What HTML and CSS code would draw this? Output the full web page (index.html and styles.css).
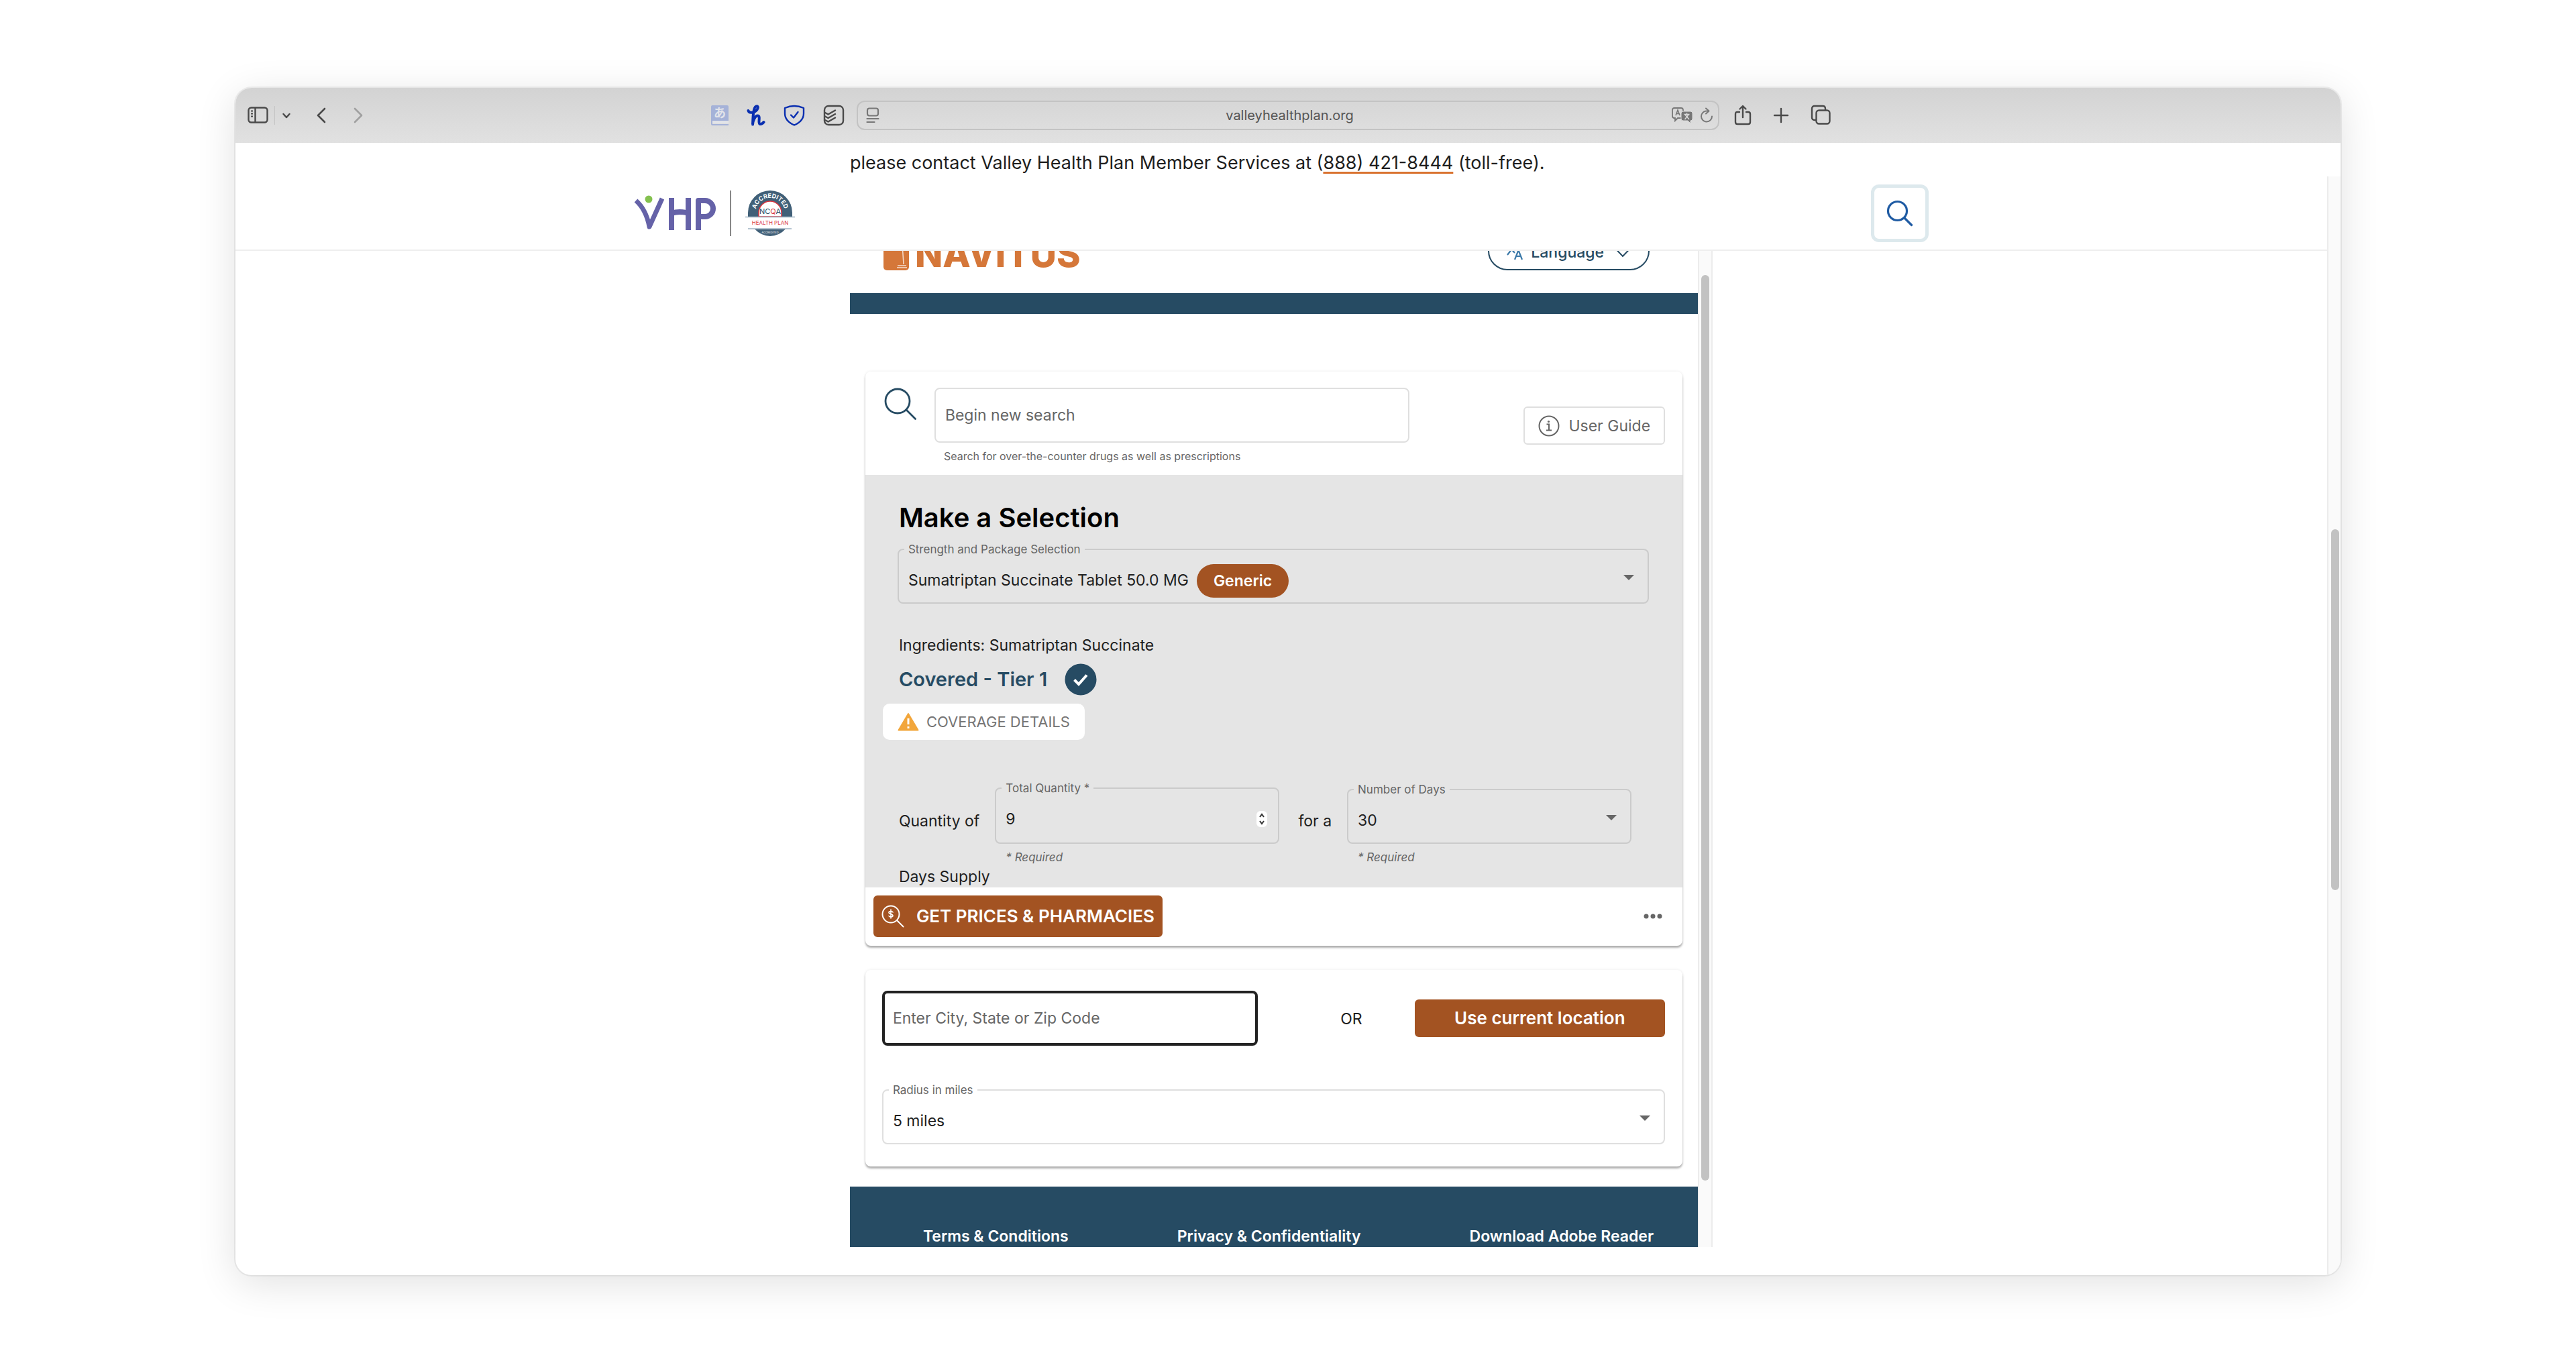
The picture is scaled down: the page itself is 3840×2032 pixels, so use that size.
FILE: index.html
```html
<!DOCTYPE html>
<html lang="en">
<head>
  <meta charset="UTF-8" />
  <meta name="viewport" content="width=device-width, initial-scale=1.0">
  <title>Valley Health Plan – Drug Search</title>
  <link rel="stylesheet" href="styles.css">
</head>
<body>

<div class="browser">

  <!-- Browser toolbar -->
  <div class="toolbar">
    <div class="tools tools-left">
      <button class="tool" aria-label="Sidebar">
        <svg width="32" height="26" viewBox="0 0 32 26" fill="none" stroke="#4a4a4a" stroke-width="2.4"><rect x="1.5" y="1.5" width="28" height="22" rx="4"/><path d="M11.500 2v21"/><path d="M5 6.500h3M5 10.500h3M5 14.500h3" stroke-width="1.800"/></svg>
      </button>
      <span class="divider"></span>
      <button class="tool" aria-label="Tab groups">
        <svg width="14" height="26" viewBox="0 0 14 26" fill="none" stroke="#4a4a4a" stroke-width="2.500" stroke-linecap="round" stroke-linejoin="round"><path d="M2.500 11l4.500 5 4.500-5"/></svg>
      </button>
      <button class="tool back" aria-label="Back">
        <svg width="14" height="26" viewBox="0 0 14 26" fill="none" stroke="#4a4a4a" stroke-width="2.600" stroke-linecap="round" stroke-linejoin="round"><path d="M12 3L2 13l10 10"/></svg>
      </button>
      <button class="tool forward" aria-label="Forward">
        <svg width="14" height="26" viewBox="0 0 14 26" fill="none" stroke="#a0a0a0" stroke-width="2.600" stroke-linecap="round" stroke-linejoin="round"><path d="M2 3l10 10L2 23"/></svg>
      </button>
    </div>

    <div class="tools tools-ext">
      <button class="tool" aria-label="Dictionary">
        <svg class="dictionary" width="26" height="30" viewBox="0 0 26 30"><path d="M2 0h22q2 0 2 2v21H0V2q0-2 2-2zM0 23h2v5h24v2H2q-2 0-2-2z" fill="#a5b2d8"/><path d="M2 23.500h24v3.500H2z" fill="#e2e4ea"/><text x="13" y="18" text-anchor="middle" class="kana">あ</text></svg>
      </button>
      <button class="tool" aria-label="Honey">
        <svg width="28" height="32" viewBox="0 0 28 32" fill="none" stroke="#0a2fb0" stroke-width="4" stroke-linecap="round" stroke-linejoin="round"><path d="M2.500 9c1 4 9 3.500 13-1.500 2.500-3.500 1-6-1.500-5C9.500 4.500 9.500 20 9 29.500c.5-6 3.500-13 7.500-13 5 0-.5 12 3.500 12.500 2 .2 4-1 5.500-3"/></svg>
      </button>
      <button class="tool" aria-label="Ad blocker">
        <svg width="32" height="32" viewBox="0 0 32 32" fill="none" stroke="#0a2fb0" stroke-width="2.400" stroke-linecap="round" stroke-linejoin="round"><path d="M16 2c5 0 9.500 1 14 3v8c0 9-7 14.500-14 17.500C9 27.500 2 22 2 13V5c4.500-2 9-3 14-3z"/><path d="M11 15.500l4 4 6.500-8.500"/></svg>
      </button>
      <button class="tool" aria-label="Todoist">
        <svg width="32" height="32" viewBox="0 0 32 32" fill="none" stroke="#4a4a4a" stroke-width="2.400" stroke-linecap="round" stroke-linejoin="round"><rect x="2" y="2" width="28" height="28" rx="6"/><path d="M3 12l4.500 2.500L18 8.500M3 17.500L7.500 20 18 14M3 23l4.500 2.500L18 19.500"/></svg>
      </button>
    </div>

    <div class="address">
      <svg width="20" height="24" viewBox="0 0 20 24" fill="none" stroke="#777" stroke-width="2.200" stroke-linecap="round"><rect x="2" y="1.500" width="16" height="11" rx="3"/><path d="M1.500 17h17M1.500 22h11"/></svg>
      <input class="address-input" type="text" aria-label="Address" value="valleyhealthplan.org">
      <svg width="32" height="26" viewBox="0 0 32 26"><path d="M4 2h10q3 0 3 3v9q0 3-3 3H9l-4 4v-4H4q-3 0-3-3V5q0-3 3-3z" fill="none" stroke="#777" stroke-width="1.800"/><path d="M6 13l3-8 3 8M7 10.500h4" fill="none" stroke="#777" stroke-width="1.600"/><path d="M17 7h11q3 0 3 3v8q0 3-3 3v4l-4-4h-7q-3 0-3-3v-8q0-3 3-3z" fill="#777" stroke="#dadada"/><path d="M18.500 11.500h8M22.500 9.500v2M19.500 19l5.500-7M26 19l-6-7" stroke="#dadada" stroke-width="1.500" fill="none"/></svg>
      <svg width="20" height="24" viewBox="0 0 20 24" fill="none" stroke="#777" stroke-width="2" stroke-linecap="round" stroke-linejoin="round"><path d="M12 5.500h-2a8 8 0 1 0 8 8"/><path d="M9 1.500l4.500 4L9 9.500"/></svg>
    </div>

    <div class="tools tools-right">
      <button class="tool" aria-label="Share">
        <svg width="26" height="32" viewBox="0 0 26 32" fill="none" stroke="#4a4a4a" stroke-width="2.400" stroke-linecap="round" stroke-linejoin="round"><path d="M8 11H5q-3 0-3 3v12q0 3 3 3h16q3 0 3-3V14q0-3-3-3h-3M13 19V2.500M8.500 6.500L13 2l4.500 4.500"/></svg>
      </button>
      <button class="tool" aria-label="New tab">
        <svg width="24" height="32" viewBox="0 0 24 32" fill="none" stroke="#4a4a4a" stroke-width="2.400" stroke-linecap="round"><path d="M12 6v20M2 16h20"/></svg>
      </button>
      <button class="tool" aria-label="Show all tabs">
        <svg width="30" height="32" viewBox="0 0 30 32" fill="none" stroke="#4a4a4a" stroke-width="2.400" stroke-linejoin="round"><rect x="8.500" y="8.500" width="20" height="20" rx="4"/><path d="M8.500 23H6q-4 0-4-4V6q0-4 4-4h12q4 0 4 4v2.500"/></svg>
      </button>
    </div>
  </div>

  <div class="page">
    <div class="page-main">
      <p class="contact">please contact Valley Health Plan Member Services at (<a href="tel:8884218444">888) 421-8444</a> (toll-free).</p>

      <!-- Site header -->
      <header class="site-header">
        <div class="site-header-inner">
          <a class="brand" href="#" aria-label="Valley Health Plan">
            <svg width="122" height="54" viewBox="0 0 122 54" fill="none" stroke="#6562a8" stroke-width="8" stroke-linejoin="round">
              <path d="M3 8C13 17 20 31 23 47L42 5" stroke-width="7"/>
              <path d="M56 4v48M81 4v48M56 27q12-4 25 0"/>
              <path d="M96 52V8h10a11 11 0 0 1 0 24H96"/>
              <circle cx="22" cy="6" r="5.500" fill="#84c14f" stroke="none"/>
            </svg>
            <span class="brand-divider"></span>
            <svg width="74" height="70" viewBox="0 0 74 70">
              <path d="M4 40V34a33 33 0 0 1 66 0v6z" fill="#416078"/>
              <path d="M20 40V34a17 17 0 0 1 34 0v6z" fill="#fff" stroke="#d8343f" stroke-width="1.500"/>
              <path d="M14 58.500h46Q50 69 37 69T14 58.500z" fill="#416078"/>
              <path d="M0 40.500h74M4 58h65" stroke="#9fb3c2" stroke-width="1.500"/>
              <path id="arc" d="M15 34a22 22 0 0 1 44 0" fill="none"/>
              <text class="badge-arc"><textPath href="#arc" startOffset="50%">ACCREDITED</textPath></text>
              <text class="badge-name" x="37" y="36">NC<tspan fill="#d8343f">Q</tspan>A</text>
              <text class="badge-plan" x="37" y="52">HEALTH PLAN</text>
              <text class="badge-foot" x="37" y="65">ACCREDITED</text>
            </svg>
          </a>
          <button class="site-search" aria-label="Search">
            <svg width="40" height="40" viewBox="0 0 40 40" fill="none" stroke="#1f5ba3" stroke-width="3.200" stroke-linecap="round"><circle cx="16.500" cy="16.500" r="14"/><path d="M27 27l10.500 10.500"/></svg>
          </button>
        </div>
      </header>

      <!-- Embedded drug search -->
      <div class="frame">
        <main class="frame-main">
          <div class="nav-head">
            <a class="navitus" href="#">
              <svg width="38" height="44" viewBox="0 0 38 44"><rect width="38" height="44" rx="5" fill="#d57739"/><path d="M28 5l2 30M21 37h13M20 40h15" stroke="#f6ddcd" stroke-width="1.500" fill="none"/></svg>
              NAVITUS
            </a>
            <button class="language">
              <svg width="26" height="26" viewBox="0 0 26 26" fill="none" stroke="#3a78a8" stroke-width="2.200"><path d="M1 3h13M7.500 0v3M1 17L12 3M3 4l9 10M12 24l5.500-14L23 24M14 19h7"/></svg>
              Language
              <svg class="caret" width="24" height="16" viewBox="0 0 24 16" fill="none" stroke="#264b63" stroke-width="2"><path d="M1.500 3L12 14 22.500 3"/></svg>
            </button>
          </div>
          <div class="nav-bar"></div>

          <section class="card drug-card">
            <div class="search-row">
              <svg width="48" height="48" viewBox="0 0 48 48" fill="none" stroke="#264b63" stroke-width="2.800" stroke-linecap="round"><circle cx="20" cy="20" r="18"/><path d="M33 33l13.500 13.500"/></svg>
              <div class="search-field">
                <input class="text-input" type="text" placeholder="Begin new search" aria-label="Begin new search">
                <p class="hint">Search for over-the-counter drugs as well as prescriptions</p>
              </div>
              <button class="guide">
                <svg width="32" height="32" viewBox="0 0 32 32" fill="none" stroke="#666" stroke-width="2"><circle cx="16" cy="16" r="14.500"/><path d="M12.500 13.500H16V22M12 22.500h8"/><circle cx="15.500" cy="9.500" r="1.600" fill="#666" stroke="none"/></svg>
                User Guide
              </button>
            </div>

            <div class="selection">
              <h1>Make a Selection</h1>
              <fieldset class="field strength">
                <legend><label for="strength">Strength and Package Selection</label></legend>
                <select id="strength"><option>Sumatriptan Succinate Tablet 50.0 MG</option></select>
                <span class="generic">Generic</span>
              </fieldset>

              <p class="ingredients">Ingredients: Sumatriptan Succinate</p>
              <p class="covered">Covered - Tier 1
                <svg width="48" height="48" viewBox="0 0 48 48"><circle cx="24" cy="24" r="23.500" fill="#264b63"/><path d="M14.500 24.500l6.500 6.500 12-13.500" fill="none" stroke="#fff" stroke-width="4"/></svg>
              </p>
              <button class="coverage">
                <svg width="32" height="28" viewBox="0 0 32 28"><path d="M16 2L30.500 26.500h-29z" fill="#f2a63b" stroke="#f2a63b" stroke-width="2" stroke-linejoin="round"/><path d="M16 9v9M16 21v3" stroke="#fff" stroke-width="3"/></svg>
                COVERAGE DETAILS
              </button>

              <div class="quantity">
                <span class="qty-text">Quantity of</span>
                <div class="qty-field">
                  <fieldset class="field">
                    <legend><label for="qty">Total Quantity *</label></legend>
                    <input id="qty" type="number" value="9">
                  </fieldset>
                  <p class="required">* Required</p>
                </div>
                <span class="qty-text">for a</span>
                <div class="qty-field">
                  <fieldset class="field">
                    <legend><label for="days">Number of Days</label></legend>
                    <select id="days"><option>30</option></select>
                  </fieldset>
                  <p class="required">* Required</p>
                </div>
              </div>
              <p class="supply">Days Supply</p>
            </div>

            <div class="actions">
              <button class="prices">
                <svg width="34" height="34" viewBox="0 0 34 34" fill="none" stroke="#fff" stroke-width="2" stroke-linecap="round"><circle cx="14" cy="14" r="12.500"/><path d="M23 23l9.500 9.500"/><path d="M17 11c-1-2-6-2-6 .5s6 2 6 4.500-5 2.500-6 .5M14 7v13" stroke-width="1.600"/></svg>
                GET PRICES &amp; PHARMACIES
              </button>
              <button class="more" aria-label="More options">
                <svg width="28" height="8" viewBox="0 0 28 8" fill="#666"><circle cx="4" cy="4" r="3.500"/><circle cx="14" cy="4" r="3.500"/><circle cx="24" cy="4" r="3.500"/></svg>
              </button>
            </div>
          </section>

          <section class="card location-card">
            <div class="location-row">
              <input class="text-input city" type="text" placeholder="Enter City, State or Zip Code" aria-label="Enter City, State or Zip Code">
              <span class="or">OR</span>
              <button class="locate">Use current location</button>
            </div>
            <fieldset class="field light">
              <legend><label for="radius">Radius in miles</label></legend>
              <select id="radius"><option>5 miles</option></select>
            </fieldset>
          </section>

          <footer class="nav-foot">
            <a href="#">Terms &amp; Conditions</a>
            <a href="#">Privacy &amp; Confidentiality</a>
            <a href="#">Download Adobe Reader</a>
          </footer>
        </main>
        <div class="frame-scroll"><div class="thumb"></div></div>
      </div>
    </div>
    <div class="page-scroll"><div class="thumb"></div></div>
  </div>
</div>

</body>
</html>
```
FILE: styles.css
```css
:root {
  --navy:   #264b63;
  --rust:   #a35322;
  --orange: #d57739;
  --panel:  #e5e5e5;
  --ink:    #1e1e1e;
  --muted:  #666;
  --line:   #dfdfdf;
}

*{box-sizing:border-box}

body{
  margin:0;
  padding:131px 0;
  background:#fff;
  color:var(--ink);
  font-family:Inter,"Noto Sans",sans-serif;
  font-size:23px;
  line-height:28px;
}
p,h1,fieldset{margin:0}
button,input,select{font:inherit;color:inherit}
button{border:none;background:none;padding:0;cursor:pointer}
svg{display:block;flex:none}

/* ----------  BROWSER WINDOW  ---------- */
.browser{
  width:81.72%;
  margin:0 auto;
  border-radius:24px;
  overflow:hidden;
  background:#fff;
  box-shadow:0 0 0 2px rgba(0,0,0,.06), 0 12px 60px rgba(0,0,0,.12);
}
.toolbar{
  display:grid;
  grid-template-columns:1fr 41% 1fr;
  align-items:center;
  height:82px;
  background:linear-gradient(#d3d3d3,#e1e1e1);
}
.tools{display:flex; align-items:center}
.tools-left{grid-column:1; grid-row:1; padding-left:18px}
.divider{width:1px; height:28px; margin:0 10px 0 8px; background:#c4c4c4}
.back{margin-left:38px}
.forward{margin-left:41px}
.tools-ext{grid-column:1; grid-row:1; justify-self:end; gap:27px; padding-right:18px}
.tools-right{padding-left:22px; gap:32px}
.dictionary{overflow:visible}
.kana{font-family:"Noto Sans CJK JP",sans-serif; font-size:18px; font-weight:700; fill:#e2e4ea}

.address{
  display:flex; align-items:center; gap:10px;
  height:44px;
  padding:0 7px 0 12px;
  border:2px solid #c3c3c3;
  border-radius:12px;
}
.address-input{
  flex:1; min-width:0;
  padding:0 0 0 42px;
  border:none; outline:none;
  background:none;
  color:#555;
  font-size:20px;
  text-align:center;
}

/* ----------  PAGE  ---------- */
.page{display:flex}
.page-main{flex:1; min-width:0; padding-bottom:42px}
.page-scroll{
  width:20px;
  margin-top:50px;
  padding:526px 2px 0 4px;
  background:#fafafa;
  border-left:2px solid #ececec;
}
.thumb{background:#c2c2c2; border-radius:8px}
.page-scroll .thumb{height:538px}

.contact{
  width:41.25%;
  margin:0 auto;
  padding-top:12px;
  height:50px;
  font-size:27px;
  line-height:36px;
  white-space:nowrap;
}
.contact a{
  color:inherit;
  text-decoration:underline 3px #d9722f;
  text-underline-offset:4px;
}

/* ----------  SITE HEADER  ---------- */
.site-header{
  height:111px;
  border-bottom:2px solid #eee;
}
.site-header-inner{
  display:flex; justify-content:space-between; align-items:center;
  width:61.9%;
  height:100%;
  margin:0 auto;
}
.brand{display:flex; align-items:center; gap:21px}
.brand-divider{width:2px; height:68px; background:#888}
.badge-arc{font-size:9px; font-weight:700; fill:#fff; text-anchor:middle}
.badge-name{font-size:11px; fill:#264b63; text-anchor:middle}
.badge-plan{font-size:8px; fill:#d8343f; text-anchor:middle}
.badge-foot{font-size:4px; fill:#fff; text-anchor:middle}
.site-search{
  display:flex; align-items:center; justify-content:center;
  width:86px; height:86px;
  border:5px solid #dde9ed;
  border-radius:12px;
}

/* ----------  FRAME  ---------- */
.frame{
  display:flex;
  width:41.25%;
  margin:0 auto;
}
.frame-main{flex:1; min-width:0}
.frame-scroll{
  width:22px;
  padding:36px 3px 0;
  background:#fafafa;
  border:solid #ececec;
  border-width:0 2px;
}
.frame-scroll .thumb{height:1350px}

.nav-head{
  display:flex; justify-content:space-between; align-items:flex-end;
  height:63px;
  padding:0 72px 34px 50px;
  overflow:hidden;
}
.navitus{
  display:flex; align-items:flex-end; gap:9px;
  color:var(--orange);
  font-size:54px; font-weight:800; line-height:48px;
  text-decoration:none;
}
.language{
  display:flex; align-items:center; gap:10px;
  height:58px;
  padding:3px 26px 0;
  border:2px solid var(--navy);
  border-radius:29px;
  color:var(--navy);
  font-weight:500;
}
.caret{margin-left:6px}
.nav-bar{height:31px; background:var(--navy)}

/* ----------  CARDS  ---------- */
.card{
  margin:0 23px;
  border-radius:8px;
  background:#fff;
  box-shadow:0 3px 3px rgba(0,0,0,.3), 0 0 4px rgba(0,0,0,.08);
}
.drug-card{margin-top:86px}
.search-row{
  display:flex; align-items:flex-start;
  height:154px;
  padding:24px 26px 0 28px;
}
.search-field{flex:none; width:60.8%; margin-left:27px}
.text-input{
  display:block;
  width:100%; height:82px;
  padding:0 14px;
  border:2px solid var(--line);
  border-radius:8px;
  background:#fff;
  outline:none;
}
.text-input::placeholder{color:var(--muted); opacity:1}
.hint{
  padding:10px 14px 0;
  color:var(--muted);
  font-size:16px; line-height:20px;
}
.guide{
  display:flex; align-items:center; gap:13px;
  height:57px;
  margin:28px 0 0 auto;
  padding:0 20px;
  border:2px solid var(--line);
  border-radius:6px;
  color:var(--muted);
}

.selection{
  padding:44px 50px 0 48px;
  background:var(--panel);
}
h1{
  padding-left:2px;
  color:#000;
  font-size:40px; font-weight:600; line-height:40px;
}

/* outlined field, the legend sits in the top border */
.field{
  position:relative;
  min-width:0;
  padding:0;
  border:2px solid #cbcbcb;
  border-radius:8px;
}
.field.light{border-color:var(--line)}
.field legend{
  margin-left:8px;
  padding:0 6px;
  color:var(--muted);
  font-size:17px; line-height:20px;
}
.field legend label{display:block}
.field select,
.field input{
  display:block;
  width:100%; height:69px;
  padding:2px 14px 0;
  border:none; outline:none;
  background:none;
  appearance:none;
}
.field select{
  background:url("data:image/svg+xml,%3Csvg xmlns='http://www.w3.org/2000/svg' width='16' height='8'%3E%3Cpath d='M0 0h16L8 8z' fill='%23666'/%3E%3C/svg%3E") no-repeat right 20px top 28px;
}
.field input[type=number]{
  height:71px;
  padding-top:0;
  appearance:textfield;
  background:url("data:image/svg+xml,%3Csvg xmlns='http://www.w3.org/2000/svg' width='16' height='24'%3E%3Crect width='16' height='24' rx='6' fill='%23fff'/%3E%3Cpath d='M5 9l3-4 3 4M5 15l3 4 3-4' fill='none' stroke='%23333' stroke-width='2'/%3E%3C/svg%3E") no-repeat right 16px top 24px;
}
.field input::-webkit-inner-spin-button{appearance:none}
.strength{margin-top:17px}
.generic{
  position:absolute;
  top:12px; left:444px;
  padding:0 25px;
  border-radius:25px;
  background:var(--rust);
  color:#fff;
  font-weight:600; line-height:50px;
}

.ingredients{margin-top:48px; padding-left:2px}
.covered{
  display:flex; align-items:center; gap:26px;
  margin-top:13px;
  padding-left:2px;
  color:var(--navy);
  font-size:29px; font-weight:600;
}
.coverage{
  display:flex; align-items:center; gap:11px;
  height:54px;
  margin:12px 0 0 -22px;
  padding:0 22px;
  border-radius:10px;
  background:#fff;
  color:#757575;
  font-size:22px;
}

.quantity{
  display:flex; align-items:flex-end;
  padding:62px 26px 0 2px;
}
.qty-text{
  align-self:flex-start;
  padding-top:45px;
  white-space:nowrap;
}
.qty-field{flex:1; margin-left:23px}
.qty-field + .qty-text{margin-left:28px}
.required{
  padding:10px 16px 0;
  color:var(--muted);
  font-size:17px; font-style:italic; line-height:20px;
}
.supply{padding:5px 2px 2px}

.actions{
  display:flex; justify-content:space-between; align-items:center;
  height:87px;
  padding:0 30px 2px 12px;
}
.prices{
  display:flex; align-items:center; gap:18px;
  height:62px;
  padding:0 12px;
  border-radius:6px;
  background:var(--rust);
  color:#fff;
  font-size:26px; font-weight:600;
}

/* ----------  LOCATION  ---------- */
.location-card{
  margin-top:36px;
  padding:31px 26px 33px 25px;
}
.location-row{
  display:flex; align-items:center;
  margin-bottom:56px;
}
.text-input.city{
  width:48%;
  border:4px solid #222;
  padding:0 12px;
}
.or{margin:0 78px 0 auto; padding-top:2px}
.locate{
  width:32%; height:56px;
  border-radius:6px;
  background:var(--rust);
  color:#fff;
  font-size:26px; font-weight:600;
}

.nav-foot{
  display:flex; justify-content:space-between;
  margin-top:30px;
  padding:60px 66px 2px 109px;
  background:var(--navy);
}
.nav-foot a{
  color:#fff;
  font-weight:600;
  text-decoration:none;
}
```
